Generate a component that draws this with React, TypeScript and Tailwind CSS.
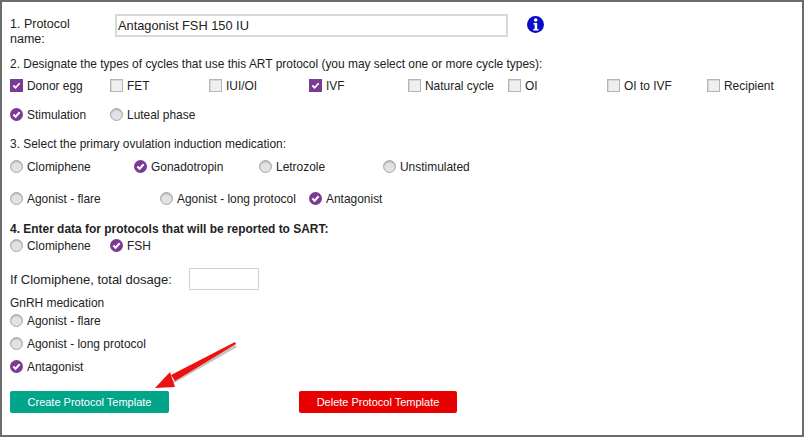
const font = { fontFamily: '"Liberation Sans", Arial, sans-serif' };

function Check({ on }: { on?: boolean }) {
  if (on) {
    return (
      <span className="w-[13px] h-[13px] bg-[#7b3a96] flex items-center justify-center shrink-0 -mt-[2px]">
        <svg width="9" height="9" viewBox="0 0 10 10" fill="none">
          <path d="M1.5 5l2.5 2.5 4.5-5" stroke="#fff" strokeWidth="2" />
        </svg>
      </span>
    );
  }
  return <span className="w-[13px] h-[13px] bg-[#efefef] border border-[#b5b5b5] shadow-[inset_1px_1px_0_#d8d8d8] shrink-0 -mt-[2px]" />;
}

function Radio({ on }: { on?: boolean }) {
  if (on) {
    return (
      <span className="w-[13px] h-[13px] rounded-full bg-[#7b3a96] flex items-center justify-center shrink-0 -mt-[3px]">
        <svg width="9" height="9" viewBox="0 0 10 10" fill="none">
          <path d="M1.5 5l2.5 2.5 4.5-5" stroke="#fff" strokeWidth="2.2" />
        </svg>
      </span>
    );
  }
  return <span className="w-[13px] h-[13px] rounded-full bg-[#e2e2e2] border border-[#a8a8a8] shadow-[inset_0_1px_1px_#aaa] shrink-0 -mt-[3px]" />;
}

function Opt({ label, on, radio }: { label: string; on?: boolean; radio?: boolean }) {
  return (
    <div className="flex items-center gap-[4px]">
      {radio ? <Radio on={on} /> : <Check on={on} />}
      <span className="whitespace-nowrap">{label}</span>
    </div>
  );
}

const cycles = [
  { label: "Donor egg", on: true },
  { label: "FET" },
  { label: "IUI/OI" },
  { label: "IVF", on: true },
  { label: "Natural cycle" },
  { label: "OI" },
  { label: "OI to IVF" },
  { label: "Recipient" },
];

export default function App() {
  return (
    <div className="relative w-[804px] h-[437px] bg-white border-2 border-[#6b6b6b] text-[11.95px] leading-[15px] text-[#222] overflow-hidden" style={font}>
      <div className="pl-[8px] pt-[13px]">
        <div className="flex h-[32px]">
          <div className="w-[105px] pt-[2px] text-[12.5px]">1. Protocol<br />name:</div>
          <div className="w-[393px] h-[23px] -mt-[1px] border-2 border-[#d5dcd8] px-[1px] flex items-center text-[12.8px]">Antagonist FSH 150 IU</div>
          <svg className="ml-[19px] mt-[1px]" width="17" height="17" viewBox="0 0 17 17">
            <circle cx="8.5" cy="8.5" r="8.5" fill="#0a0ac8" />
            <circle cx="8.7" cy="4" r="1.8" fill="#fff" />
            <path d="M6.5 7h3.7v6h1.3v1.6H6.3V13h1.3V8.6H6.5z" fill="#fff" />
          </svg>
        </div>
        <div className="mt-[10px]">2. Designate the types of cycles that use this ART protocol (you may select one or more cycle types):</div>
        <div className="grid grid-cols-[100px_99px_100px_99px_100px_99px_100px_99px] mt-[7px] h-[15px]">
          {cycles.map((c) => (
            <Opt key={c.label} label={c.label} on={c.on} />
          ))}
        </div>
        <div className="grid grid-cols-[100px_200px] mt-[14px] h-[15px]">
          <Opt radio on label="Stimulation" />
          <Opt radio label="Luteal phase" />
        </div>
        <div className="mt-[14px]">3. Select the primary ovulation induction medication:</div>
        <div className="grid grid-cols-[124px_125px_124px_150px] mt-[8px] h-[15px]">
          <Opt radio label="Clomiphene" />
          <Opt radio on label="Gonadotropin" />
          <Opt radio label="Letrozole" />
          <Opt radio label="Unstimulated" />
        </div>
        <div className="grid grid-cols-[150px_149px_150px] mt-[17px] h-[15px]">
          <Opt radio label="Agonist - flare" />
          <Opt radio label="Agonist - long protocol" />
          <Opt radio on label="Antagonist" />
        </div>
        <div className="mt-[15px] font-bold">4. Enter data for protocols that will be reported to SART:</div>
        <div className="grid grid-cols-[100px_100px] mt-[2px] h-[15px]">
          <Opt radio label="Clomiphene" />
          <Opt radio on label="FSH" />
        </div>
        <div className="flex items-center mt-[13px] h-[23px]">
          <span className="w-[179px] text-[13px] pt-[1px]">If Clomiphene, total dosage:</span>
          <span className="w-[70px] h-[22px] border border-[#d0d0d0] rounded-[1px]" />
        </div>
        <div className="mt-[6px]">GnRH medication</div>
        <div className="flex flex-col gap-[8px] mt-[3px]">
          <Opt radio label="Agonist - flare" />
          <Opt radio label="Agonist - long protocol" />
          <Opt radio on label="Antagonist" />
        </div>
        <div className="flex mt-[16px]">
          <button className="w-[159px] h-[22px] bg-[#00a58a] text-white rounded-[2px] text-[11px]">Create Protocol Template</button>
          <button className="w-[158px] h-[22px] ml-[130px] bg-[#e60000] text-white rounded-[2px] text-[11px]">Delete Protocol Template</button>
        </div>
      </div>
      <svg className="absolute left-[-2px] top-[-2px] pointer-events-none" width="804" height="437" viewBox="0 0 804 437" fill="none">
        <path d="M235 344L172 380" stroke="#555" strokeOpacity="0.35" strokeWidth="3" transform="translate(1 2)" />
        <path d="M235 342L236 344L175 381L171 375z" fill="#ee1111" />
        <path d="M155 388L170 372L175 387z" fill="#ee1111" />
      </svg>
    </div>
  );
}
